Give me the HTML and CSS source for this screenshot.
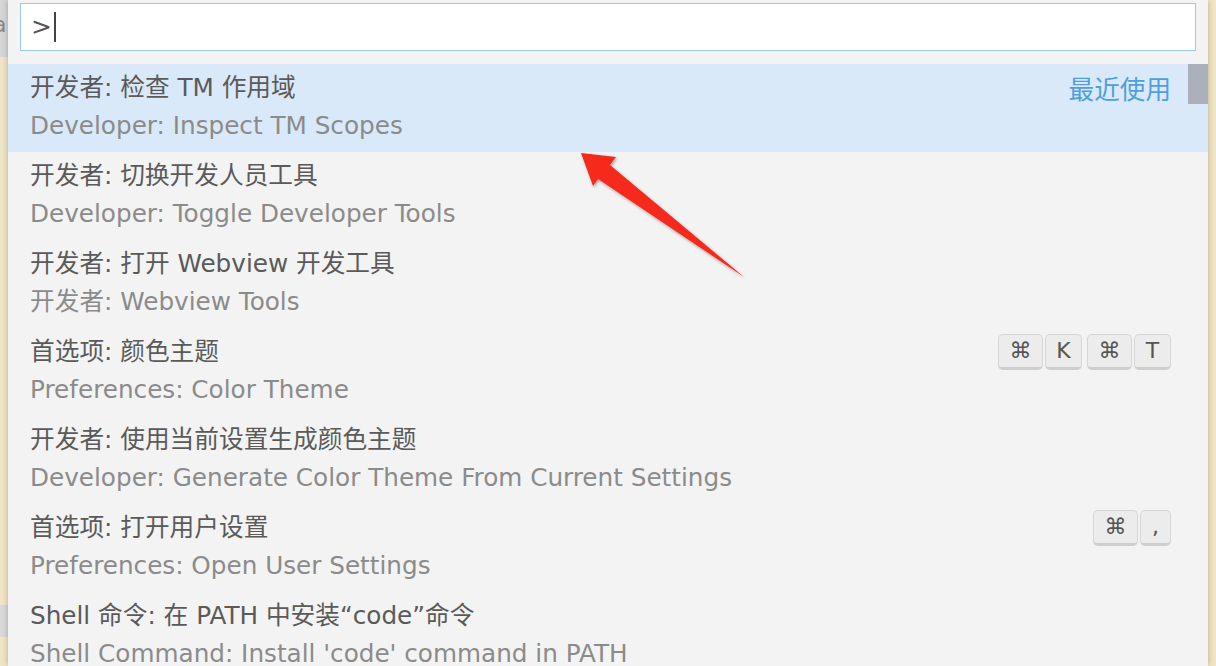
FILE: index.html
```html
<!DOCTYPE html>
<html lang="zh">
<head>
<meta charset="utf-8">
<title>Command Palette</title>
<link rel="stylesheet" href="styles.css">
</head>
<body>
<div class="screen">
  <div class="edge edge-left">
    <div class="edge-top"><span class="edge-char">a</span></div>
    <div class="edge-mid"></div>
    <div class="edge-gray"></div>
    <div class="edge-rest"></div>
  </div>

  <div class="palette">
    <div class="input-wrap">
      <div class="input"><span class="prompt">&gt;</span><span class="caret"></span></div>
    </div>

    <div class="list">
      <div class="row selected">
        <div class="texts">
          <div class="label">开发者: 检查 TM 作用域</div>
          <div class="desc">Developer: Inspect TM Scopes</div>
        </div>
        <div class="aside"><span class="recent">最近使用</span></div>
      </div>

      <div class="row">
        <div class="texts">
          <div class="label">开发者: 切换开发人员工具</div>
          <div class="desc">Developer: Toggle Developer Tools</div>
        </div>
      </div>

      <div class="row">
        <div class="texts">
          <div class="label">开发者: 打开 Webview 开发工具</div>
          <div class="desc">开发者: Webview Tools</div>
        </div>
      </div>

      <div class="row">
        <div class="texts">
          <div class="label">首选项: 颜色主题</div>
          <div class="desc">Preferences: Color Theme</div>
        </div>
        <div class="aside">
          <div class="chord"><span class="key key-cmd">⌘</span><span class="key">K</span></div>
          <div class="chord"><span class="key key-cmd">⌘</span><span class="key">T</span></div>
        </div>
      </div>

      <div class="row">
        <div class="texts">
          <div class="label">开发者: 使用当前设置生成颜色主题</div>
          <div class="desc">Developer: Generate Color Theme From Current Settings</div>
        </div>
      </div>

      <div class="row">
        <div class="texts">
          <div class="label">首选项: 打开用户设置</div>
          <div class="desc">Preferences: Open User Settings</div>
        </div>
        <div class="aside">
          <div class="chord"><span class="key key-cmd">⌘</span><span class="key key-narrow">,</span></div>
        </div>
      </div>

      <div class="row">
        <div class="texts">
          <div class="label">Shell 命令: 在 PATH 中安装“code”命令</div>
          <div class="desc">Shell Command: Install 'code' command in PATH</div>
        </div>
      </div>

      <div class="scrollbar"></div>
    </div>
  </div>

  <div class="edge edge-right">
    <div class="edge-rest"></div>
  </div>

  <svg class="arrow" width="1216" height="666" viewBox="0 0 1216 666" aria-hidden="true">
    <defs>
      <filter id="shadow" x="-20%" y="-20%" width="140%" height="140%">
        <feDropShadow dx="1" dy="1.5" stdDeviation="1.5" flood-color="#000" flood-opacity="0.35"/>
      </filter>
    </defs>
    <path d="M581,153 L616,157 L610,165 L744,277 L598,179 L593,186 Z" fill="#f52a1a" filter="url(#shadow)"/>
  </svg>
</div>
</body>
</html>
```

FILE: styles.css
```css
* { box-sizing: border-box; }

html, body {
  margin: 0;
  padding: 0;
  width: 1216px;
  height: 666px;
  overflow: hidden;
  background: #f0e6c6;
}

.screen {
  position: relative;
  display: flex;
  width: 1216px;
  height: 666px;
  font-family: "DejaVu Sans", "Noto Sans CJK SC", sans-serif;
}

.edge {
  width: 8px;
  flex: 0 0 8px;
  display: flex;
  flex-direction: column;
  overflow: hidden;
  background: #f0e6c6;
}

.edge-top {
  height: 57px;
  background: #d6d6d6;
  overflow: hidden;
}

.edge-char {
  display: block;
  margin-left: -7px;
  margin-top: 12px;
  font-size: 22px;
  color: #8a8a8a;
  line-height: 26px;
}

.edge-mid {
  height: 548px;
  background: #f0e6c6;
}

.edge-gray {
  height: 32px;
  background: #d9d9d9;
}

.edge-rest {
  flex: 1;
  background: #f0e6c6;
}

.palette {
  width: 1200px;
  flex: 0 0 1200px;
  height: 666px;
  background: #f3f3f3;
  box-shadow: 0 0 6px rgba(0, 0, 0, 0.25);
  position: relative;
  z-index: 1;
  display: flex;
  flex-direction: column;
}

.input-wrap {
  padding: 3px 12px 13px 12px;
}

.input {
  height: 48px;
  background: #ffffff;
  border: 1px solid #9bc8ec;
  display: flex;
  align-items: center;
  padding-left: 10px;
}

.prompt {
  font-size: 25px;
  color: #555555;
  line-height: 30px;
}

.caret {
  display: inline-block;
  width: 2px;
  height: 30px;
  margin-left: 2px;
  background: #444444;
}

.list {
  position: relative;
  flex: 1;
  overflow: hidden;
}

.row {
  height: 88px;
  display: flex;
  justify-content: space-between;
  padding: 5px 37px 7px 22px;
}

.row.selected {
  background: #dae9f9;
}

.texts {
  display: flex;
  flex-direction: column;
}

.label {
  font-size: 24.7px;
  line-height: 38px;
  color: #5a5a5a;
  white-space: nowrap;
}

.desc {
  font-size: 24.7px;
  line-height: 38px;
  color: #8b8b8b;
  white-space: nowrap;
}

.aside {
  display: flex;
  align-items: center;
  height: 38px;
  gap: 5px;
}

.recent {
  font-family: "Noto Sans CJK SC", sans-serif;
  font-size: 25.6px;
  line-height: 38px;
  color: #4f9fdc;
}

.chord {
  display: flex;
  gap: 2px;
}

.key {
  display: flex;
  align-items: center;
  justify-content: center;
  width: 37px;
  height: 36px;
  background: #ececec;
  border: 1px solid #d6d6d6;
  border-bottom: 3px solid #cfcfcf;
  border-radius: 5px;
  font-size: 22px;
  color: #555555;
  line-height: 1;
}

.key-cmd {
  width: 45px;
}

.key-narrow {
  width: 31px;
}

.scrollbar {
  position: absolute;
  top: 0;
  right: 0;
  width: 20px;
  height: 40px;
  background: #abb0ba;
}

.arrow {
  position: absolute;
  left: 0;
  top: 0;
  z-index: 5;
  pointer-events: none;
}
```
